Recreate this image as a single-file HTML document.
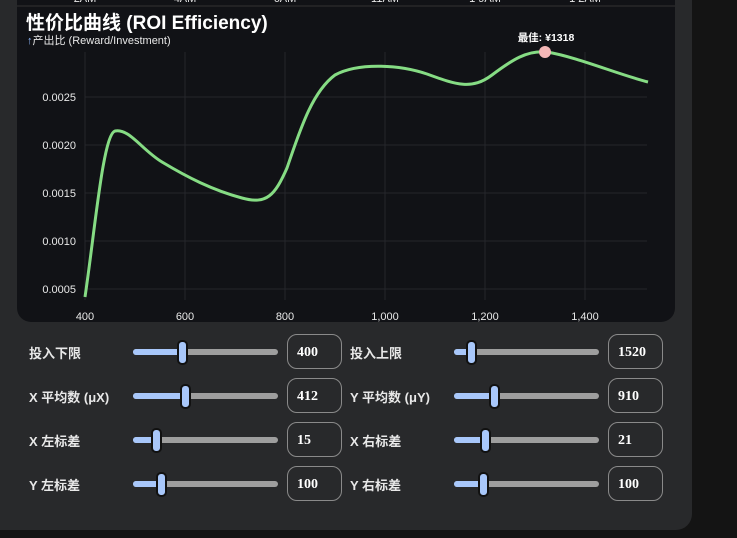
<!DOCTYPE html>
<html><head><meta charset="utf-8"><style>
body{margin:0;width:737px;height:538px;background:#141414;overflow:hidden;font-family:"Liberation Sans","Noto Sans CJK SC",sans-serif;position:relative}
.panel{position:absolute;left:0;top:-20px;width:692px;height:550px;background:#28292b;border-radius:0 0 16px 0}
.chart{position:absolute;left:17px;top:0;width:658px;height:322px;background:#111216;border-radius:0 0 14px 14px;overflow:hidden}
.lbl{position:absolute;color:#e8e8e8;font-size:13px;font-weight:bold}
.sl{position:absolute;height:6px;background:#9e9e9e;border-radius:3px;width:145px}
.sl i{position:absolute;left:0;top:0;height:6px;background:#a8c7fa;border-radius:3px}
.sl b{position:absolute;top:-9px;width:7px;height:21px;background:#a8c7fa;border:2px solid #111;border-radius:5px;margin-left:-5px}
.in{position:absolute;width:55px;height:35px;border:1px solid #8a8a8a;border-radius:10px;box-sizing:border-box;color:#fff;font:bold 14px "Liberation Serif",serif;line-height:36px;padding-left:9px}
</style></head><body>
<div class="panel"></div>
<div class="chart">
<svg width="658" height="322" style="position:absolute;left:0;top:0" font-family="Liberation Sans, sans-serif">
<g fill="#e8e8e8" font-size="11" text-anchor="middle"><text x="68" y="2">2AM</text><text x="168" y="2">4AM</text><text x="268" y="2">6AM</text><text x="368" y="2">11AM</text><text x="468" y="2">1 9AM</text><text x="568" y="2">1 2AM</text></g>
<line x1="0" y1="6" x2="658" y2="6" stroke="#333" stroke-width="1"/>
<g stroke="#25262b" stroke-width="1">
<line x1="68" y1="52" x2="68" y2="300"/><line x1="168" y1="52" x2="168" y2="300"/><line x1="268" y1="52" x2="268" y2="300"/><line x1="368" y1="52" x2="368" y2="300"/><line x1="468" y1="52" x2="468" y2="300"/><line x1="568" y1="52" x2="568" y2="300"/>
<line x1="68" y1="97" x2="630" y2="97"/><line x1="68" y1="145" x2="630" y2="145"/><line x1="68" y1="193" x2="630" y2="193"/><line x1="68" y1="241" x2="630" y2="241"/><line x1="68" y1="289" x2="630" y2="289"/>
</g>
<g fill="#e8e8e8" font-size="11" text-anchor="end">
<text x="59" y="101">0.0025</text><text x="59" y="149">0.0020</text><text x="59" y="197">0.0015</text><text x="59" y="245">0.0010</text><text x="59" y="293">0.0005</text>
</g>
<g fill="#e8e8e8" font-size="11" text-anchor="middle">
<text x="68" y="320">400</text><text x="168" y="320">600</text><text x="268" y="320">800</text><text x="368" y="320">1,000</text><text x="468" y="320">1,200</text><text x="568" y="320">1,400</text>
</g>
<path d="M68,297 C78,230 86,135 98,131 C112,128 125,150 145,162 C170,177 195,190 225,198 C250,205 258,195 270,168 C283,130 295,92 318,75 C340,63 380,64 410,74 C440,85 455,90 475,75 C495,60 510,50 530,52 C560,57 600,74 631,82" fill="none" stroke="#86dc84" stroke-width="3"/>
<circle cx="528" cy="52" r="6" fill="#f4b7b7"/>
<text x="529" y="41" fill="#fff" font-size="10.5" font-weight="bold" text-anchor="middle" font-family="Liberation Sans, Noto Sans CJK SC, sans-serif">最佳: ¥1318</text>
</svg>
<div style="position:absolute;left:9px;top:8px;color:#fff;font-size:19px;font-weight:bold">性价比曲线 (ROI Efficiency)</div>
<div style="position:absolute;left:10px;top:32px;color:#e8e8e8;font-size:11px"><span style="color:#8ab4f8">↑</span>产出比 (Reward/Investment)</div>
</div>

<div class="lbl" style="left:29px;top:343px">投入下限</div>
<div class="sl" style="left:133px;top:349px"><i style="width:49px"></i><b style="left:49px"></b></div>
<div class="in" style="left:287px;top:334px">400</div>
<div class="lbl" style="left:350px;top:343px">投入上限</div>
<div class="sl" style="left:454px;top:349px"><i style="width:17px"></i><b style="left:17px"></b></div>
<div class="in" style="left:608px;top:334px">1520</div>

<div class="lbl" style="left:29px;top:387px">X 平均数 (μX)</div>
<div class="sl" style="left:133px;top:393px"><i style="width:52px"></i><b style="left:52px"></b></div>
<div class="in" style="left:287px;top:378px">412</div>
<div class="lbl" style="left:350px;top:387px">Y 平均数 (μY)</div>
<div class="sl" style="left:454px;top:393px"><i style="width:40px"></i><b style="left:40px"></b></div>
<div class="in" style="left:608px;top:378px">910</div>

<div class="lbl" style="left:29px;top:431px">X 左标差</div>
<div class="sl" style="left:133px;top:437px"><i style="width:23px"></i><b style="left:23px"></b></div>
<div class="in" style="left:287px;top:422px">15</div>
<div class="lbl" style="left:350px;top:431px">X 右标差</div>
<div class="sl" style="left:454px;top:437px"><i style="width:31px"></i><b style="left:31px"></b></div>
<div class="in" style="left:608px;top:422px">21</div>

<div class="lbl" style="left:29px;top:475px">Y 左标差</div>
<div class="sl" style="left:133px;top:481px"><i style="width:28px"></i><b style="left:28px"></b></div>
<div class="in" style="left:287px;top:466px">100</div>
<div class="lbl" style="left:350px;top:475px">Y 右标差</div>
<div class="sl" style="left:454px;top:481px"><i style="width:29px"></i><b style="left:29px"></b></div>
<div class="in" style="left:608px;top:466px">100</div>
</body></html>
